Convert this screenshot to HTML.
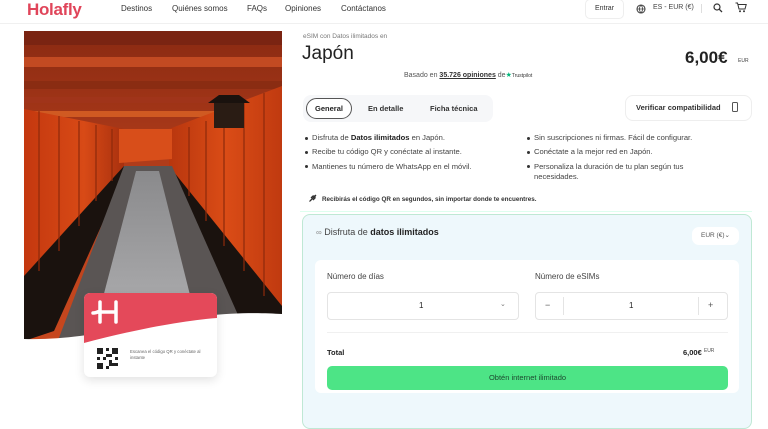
<!DOCTYPE html>
<html><head><meta charset="utf-8"><style>
*{box-sizing:border-box;margin:0;padding:0}
body{width:768px;height:427px;overflow:hidden;background:#fff;font-family:"Liberation Sans",sans-serif;color:#222;position:relative}
.a{position:absolute}
.nav{font-size:8px;color:#333}
.b{font-weight:bold}
ul{list-style:none}
li{font-size:7.6px;color:#444;margin-bottom:4.5px;padding-left:7px;position:relative;line-height:1.3}
li:before{content:"";position:absolute;left:0;top:3.5px;width:3px;height:3px;border-radius:50%;background:#333}
</style></head><body>
<!-- header -->
<div class="a" style="left:27px;top:0px;font-size:17px;font-weight:bold;color:#e0455a;letter-spacing:-0.3px">Holafly</div>
<div class="a nav" style="left:121px;top:4px">Destinos</div>
<div class="a nav" style="left:172px;top:4px">Quiénes somos</div>
<div class="a nav" style="left:247px;top:4px">FAQs</div>
<div class="a nav" style="left:285px;top:4px">Opiniones</div>
<div class="a nav" style="left:341px;top:4px">Contáctanos</div>
<div class="a" style="left:585px;top:-1px;width:39px;height:20px;border:1px solid #eee;border-radius:5px;font-size:7px;text-align:center;line-height:18px;color:#333">Entrar</div>
<svg class="a" style="left:636px;top:4px" width="10" height="10" viewBox="0 0 10 10"><circle cx="5" cy="5" r="4" fill="none" stroke="#444" stroke-width="1.1"/><path d="M1 5h8M5 1c-2 2-2 6 0 8M5 1c2 2 2 6 0 8" fill="none" stroke="#444" stroke-width=".8"/></svg>
<div class="a" style="left:653px;top:4px;font-size:7px;color:#444">ES - EUR (€)</div>
<div class="a" style="left:701px;top:4px;width:1px;height:9px;background:#ddd"></div>
<svg class="a" style="left:713px;top:3px" width="10" height="10" viewBox="0 0 10 10"><circle cx="4" cy="4" r="3" fill="none" stroke="#333" stroke-width="1.2"/><path d="M6.3 6.3L9 9" stroke="#333" stroke-width="1.3"/></svg>
<svg class="a" style="left:735px;top:2px" width="12" height="11" viewBox="0 0 12 11"><path d="M0.5 1h2l1.5 6h6l1.2-4.5H3" fill="none" stroke="#333" stroke-width="1"/><circle cx="5" cy="9.3" r="1" fill="#333"/><circle cx="9" cy="9.3" r="1" fill="#333"/></svg>
<div class="a" style="left:0;top:23px;width:768px;height:1px;background:#f0f0f0"></div>

<!-- photo -->
<svg class="a" style="left:24px;top:31px" width="258" height="320" viewBox="0 0 258 320">
<defs>
<linearGradient id="top" x1="0" y1="0" x2="0" y2="1"><stop offset="0" stop-color="#8a2a12"/><stop offset=".5" stop-color="#b8401c"/><stop offset="1" stop-color="#c8481e"/></linearGradient>
<linearGradient id="lp" x1="0" y1="0" x2="1" y2="0"><stop offset="0" stop-color="#c4380f"/><stop offset=".6" stop-color="#d84a16"/><stop offset="1" stop-color="#a8300e"/></linearGradient>
<linearGradient id="rp" x1="0" y1="0" x2="1" y2="0"><stop offset="0" stop-color="#b8360e"/><stop offset=".5" stop-color="#da4c16"/><stop offset="1" stop-color="#c03a10"/></linearGradient>
<linearGradient id="path" x1="0" y1="0" x2="0" y2="1"><stop offset="0" stop-color="#8a8a8c"/><stop offset="1" stop-color="#b4b4b6"/></linearGradient>
</defs>
<rect width="258" height="320" fill="url(#top)"/>
<rect y="0" width="258" height="14" fill="#7a2412"/>
<rect y="26" width="258" height="10" fill="#c24a22"/>
<rect y="50" width="258" height="8" fill="#8a2c12"/>
<rect y="66" width="258" height="6" fill="#a0341a"/>
<rect y="80" width="258" height="6" fill="#d05a22"/>
<polygon points="0,78 100,98 100,140 0,245" fill="url(#lp)"/>
<polygon points="0,245 100,135 102,140 30,300 0,310" fill="#1a120e"/>
<polygon points="258,55 145,98 145,140 258,280" fill="url(#rp)"/>
<polygon points="145,135 258,275 258,320 225,320 148,145" fill="#1a120e"/>
<polygon points="95,98 148,98 148,128 95,132" fill="#d84e1a"/>
<g stroke="#8e2a0c" stroke-width="2" opacity=".6"><path d="M15 80V240M35 85V220M55 90V195M72 94V170M88 98V150M240 62V265M220 72V240M200 82V215M182 90V190M165 96V165"/></g>
<polygon points="100,135 148,135 230,320 30,320" fill="#5a5554"/>
<polygon points="112,140 135,140 180,320 65,320" fill="url(#path)"/>
<rect x="190" y="72" width="30" height="25" fill="#2a1c14"/><polygon points="184,72 226,72 215,64 195,64" fill="#1a120e"/>
<path d="M0 308 C60 310 120 292 180 285 C215 281 240 282 258 283 V320 H0Z" fill="#fff"/>
</svg>

<!-- card -->
<div class="a" style="left:84px;top:293px;width:133px;height:84px;border-radius:6px;background:#fff;box-shadow:0 3px 10px rgba(0,0,0,.12);overflow:hidden">
<svg class="a" style="left:0;top:0" width="133" height="50" viewBox="0 0 133 50"><path d="M0 0H133V25C95 28 45 38 0 50Z" fill="#e4495a"/><path d="M9 20c3 0 5-1 7-2M16 9V29M32 9V29M16 19H32" stroke="#fff" stroke-width="3.5" fill="none" stroke-linecap="round"/></svg>
<svg class="a" style="left:13px;top:55px" width="21" height="21" viewBox="0 0 7 7"><rect width="7" height="7" fill="#fff"/><path d="M0 0h2v2H0zM5 0h2v2H5zM0 5h2v2H0zM3 0h1v1H3zM3 2h2v1H3zM2 3h1v1H2zM4 4h1v2H4zM6 3h1v1H6zM3 6h1v1H3zM5 5h2v1H5zM0 3h1v1H0z" fill="#222"/></svg>
<div class="a" style="left:46px;top:56px;font-size:4.3px;color:#666;width:85px;line-height:1.3">Escanea el código QR y conéctate al instante</div>
</div>

<!-- right -->
<div class="a" style="left:303px;top:33px;font-size:6.5px;color:#777">eSIM con Datos ilimitados en</div>
<div class="a" style="left:302px;top:43px;font-size:19px;color:#222">Japón</div>
<div class="a" style="left:685px;top:48px;font-size:17px;font-weight:bold;color:#222">6,00€</div>
<div class="a" style="left:738px;top:58px;font-size:5px;color:#444">EUR</div>
<div class="a" style="left:404px;top:71px;font-size:7px;color:#555">Basado en <span class="b" style="text-decoration:underline;color:#333">35.726 opiniones</span> de<span style="color:#00b67a">★</span><span style="font-size:5px;color:#333">Trustpilot</span></div>

<div class="a" style="left:303px;top:95px;width:190px;height:27px;background:#f6f7f9;border-radius:8px"></div>
<div class="a" style="left:306px;top:98px;width:46px;height:21px;border:1px solid #555;border-radius:11px;background:#fff;font-size:7.5px;font-weight:bold;text-align:center;line-height:19px">General</div>
<div class="a b" style="left:368px;top:104px;font-size:7.5px;color:#333">En detalle</div>
<div class="a b" style="left:430px;top:104px;font-size:7.5px;color:#333">Ficha técnica</div>
<div class="a" style="left:625px;top:95px;width:127px;height:26px;border:1px solid #eee;border-radius:8px;font-size:7.5px;font-weight:bold;color:#333;line-height:24px;padding-left:10px">Verificar compatibilidad</div>
<div class="a" style="left:732px;top:102px;width:6px;height:10px;border:1px solid #555;border-radius:1.5px"></div>

<ul class="a" style="left:305px;top:133px;width:220px">
<li>Disfruta de <b style="color:#222">Datos ilimitados</b> en Japón.</li>
<li>Recibe tu código QR y conéctate al instante.</li>
<li>Mantienes tu número de WhatsApp en el móvil.</li>
</ul>
<ul class="a" style="left:527px;top:133px;width:185px">
<li>Sin suscripciones ni firmas. Fácil de configurar.</li>
<li>Conéctate a la mejor red en Japón.</li>
<li>Personaliza la duración de tu plan según tus necesidades.</li>
</ul>
<svg class="a" style="left:308px;top:194px" width="9" height="9" viewBox="0 0 9 9"><path d="M2 7L8 1M3 4l2-2h2M5 6l2-2V2" stroke="#333" stroke-width="1.3" fill="none"/><path d="M1 8l1-2 1 1z" fill="#333"/></svg>
<div class="a b" style="left:322px;top:196px;font-size:6.3px;color:#333">Recibirás el código QR en segundos, sin importar donde te encuentres.</div>
<div class="a" style="left:300px;top:211px;width:452px;height:1px;background:#dfe"></div>

<!-- box -->
<div class="a" style="left:302px;top:214px;width:450px;height:215px;background:#eef8fc;border:1px solid #bfe8d4;border-radius:8px"></div>
<div class="a" style="left:316px;top:227px;font-size:9px;color:#444"><span style="font-size:8px;color:#888">∞</span> Disfruta de <b style="color:#222">datos ilimitados</b></div>
<div class="a" style="left:692px;top:227px;width:47px;height:18px;background:#fff;border-radius:7px;font-size:6.5px;color:#555;text-align:center;line-height:18px">EUR (€)⌄</div>
<div class="a" style="left:315px;top:260px;width:424px;height:133px;background:#fff;border-radius:6px"></div>
<div class="a" style="left:327px;top:272px;font-size:8px;color:#444">Número de días</div>
<div class="a" style="left:535px;top:272px;font-size:8px;color:#444">Número de eSIMs</div>
<div class="a" style="left:327px;top:292px;width:192px;height:28px;border:1px solid #e4e4e4;border-radius:4px"></div>
<div class="a" style="left:419px;top:301px;font-size:8px">1</div>
<div class="a" style="left:500px;top:300px;font-size:7px;color:#777">⌄</div>
<div class="a" style="left:535px;top:292px;width:193px;height:28px;border:1px solid #e4e4e4;border-radius:4px"></div>
<div class="a" style="left:545px;top:300px;font-size:9px;color:#555">−</div>
<div class="a" style="left:563px;top:297px;width:1px;height:18px;background:#e4e4e4"></div>
<div class="a" style="left:629px;top:301px;font-size:8px">1</div>
<div class="a" style="left:698px;top:297px;width:1px;height:18px;background:#e4e4e4"></div>
<div class="a" style="left:708px;top:300px;font-size:9px;color:#555">+</div>
<div class="a" style="left:327px;top:332px;width:401px;height:1px;background:#f0f0f0"></div>
<div class="a b" style="left:327px;top:348px;font-size:7.5px;color:#222">Total</div>
<div class="a b" style="left:683px;top:348px;font-size:7.5px;color:#222">6,00€ <span style="font-size:5px;font-weight:normal;color:#555;vertical-align:top">EUR</span></div>
<div class="a" style="left:327px;top:366px;width:401px;height:24px;background:#4de486;border-radius:5px;font-size:7.5px;color:#1e4a30;text-align:center;line-height:24px">Obtén internet ilimitado</div>
</body></html>
